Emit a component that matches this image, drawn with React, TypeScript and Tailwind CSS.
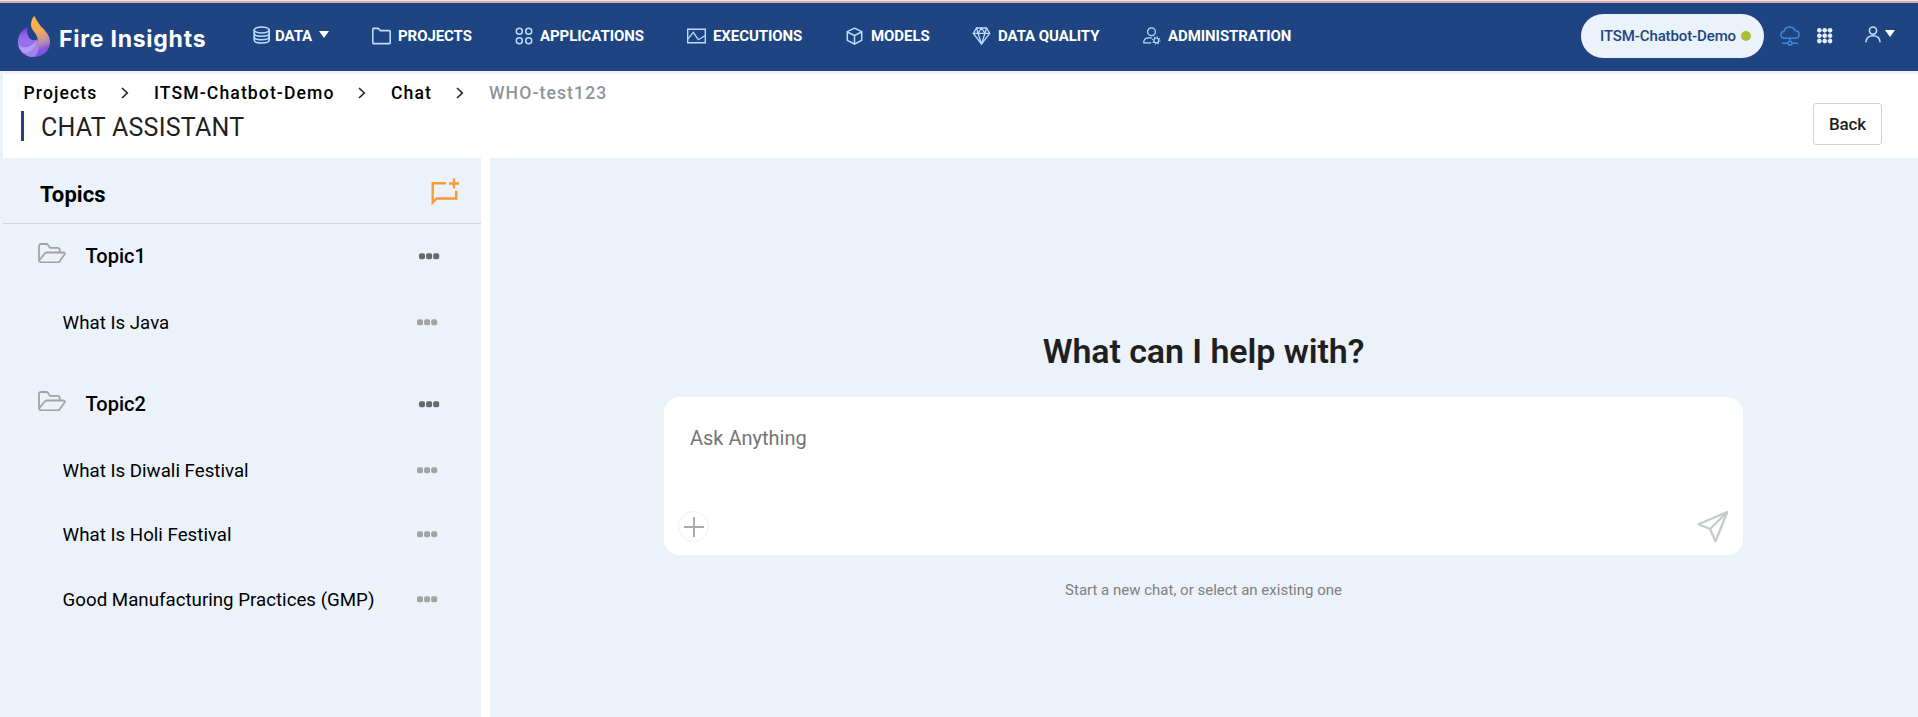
import type { ReactNode } from 'react';

const Flame = () => (
  <svg width="34" height="42" viewBox="0 0 34 42" className="shrink-0">
    <defs>
      <linearGradient id="fl" x1="0.35" y1="0" x2="0.55" y2="1">
        <stop offset="0" stopColor="#ffb347" />
        <stop offset="0.4" stopColor="#f5a85c" />
        <stop offset="0.68" stopColor="#b98bb0" />
        <stop offset="0.85" stopColor="#8257dd" />
        <stop offset="1" stopColor="#7650e6" />
      </linearGradient>
      <linearGradient id="sw" x1="0.4" y1="0" x2="0.5" y2="1">
        <stop offset="0" stopColor="#6a3be2" />
        <stop offset="0.45" stopColor="#a884ee" />
        <stop offset="1" stopColor="#8f6ae8" />
      </linearGradient>
    </defs>
    <path d="M17 0C19.500 3 20.500 6.500 24 10.500C29 15.500 33 19.500 33 26C33 34.500 26 41 17 41C13 41 11 40 10 39C16 36 21.500 29 20.500 22.500C19.500 17 14.500 14.500 14 9.500C13.700 6 15 2.500 17 0Z" fill="url(#fl)" />
    <path d="M10.500 11.500C9.800 16 10.500 20.500 13.500 23.300C15 24.800 18 24.800 20 23.500C21 25 22 33 19 37C18 38.500 17.500 40 16 41C8 41 1 34.500 1 26C1 19.500 4 14 10.500 11.500Z" fill="url(#sw)" />
    <path d="M1.200 24C3 19 8 17.500 11 20C13 24 16 25.300 19.800 23.700C18 29 13 32 7 31.500C4 31 1.500 28 1.200 24Z" fill="#8f66ea" opacity="0.650" />
    <path d="M1.500 29.500C7 33 14 31.500 19.500 24.500C20 31 14 37 7 37.500C4 35.500 2.300 33 1.500 29.500Z" fill="#b49af2" />
    <path d="M7 37.500C13 37.500 18.500 33 20 25.500C23 32 21.500 38 16.500 41C13 41 9.500 40 7 37.500Z" fill="#a283ec" />
  </svg>
);

const s = { fill: 'none', stroke: '#b9dcff', strokeWidth: 1.4, strokeLinejoin: 'round' as const, strokeLinecap: 'round' as const };

const DatabaseIcon = () => (
  <svg width="18" height="18" viewBox="0 0 18 18" {...s} strokeWidth={1.6}>
    <ellipse cx="8.700" cy="4" rx="7.500" ry="3" />
    <path d="M1.200 4v10c0 1.700 3.300 3 7.500 3s7.500-1.300 7.500-3V4" />
    <path d="M1.200 7.300c0 1.700 3.300 3 7.500 3s7.500-1.300 7.500-3M1.200 10.800c0 1.700 3.300 3 7.500 3s7.500-1.300 7.500-3" />
  </svg>
);
const FolderIcon = () => (
  <svg width="19" height="18" viewBox="0 0 19 18" {...s} strokeWidth={1.6}>
    <path d="M.8 15.800V2.200c0-.5.3-.8.8-.8h4.600l2.200 2.200h9c.5 0 .8.300.8.800v11.400c0 .5-.3.800-.8.800H1.600c-.5 0-.8-.3-.8-.8Z" />
  </svg>
);
const AppsIcon = () => (
  <svg width="18" height="18" viewBox="0 0 18 18" {...s} strokeWidth={1.5}>
    <circle cx="4.300" cy="4.300" r="3" /><circle cx="13.700" cy="4.300" r="3" />
    <circle cx="4.300" cy="13.700" r="3" /><circle cx="13.700" cy="13.700" r="3" />
  </svg>
);
const ExecIcon = () => (
  <svg width="20" height="18" viewBox="0 0 20 18" {...s} strokeWidth={1.4} strokeLinejoin="miter">
    <path d="M1.700 2.200h17.600v13.600H1.700Z" />
    <path d="M2 11.800 7.300 5.300 12.300 12.700 19 8.800" strokeWidth="1.200" />
  </svg>
);
const CubeIcon = () => (
  <svg width="18" height="18" viewBox="0 0 18 18" {...s} strokeWidth={1.5}>
    <path d="M9.500 1.200 16.700 4.700v8.600L9.500 17 2.300 13.300V4.700Z" />
    <path d="M2.300 5 9.500 8.500 16.700 5M9.500 8.500V17" />
  </svg>
);
const GemIcon = () => (
  <svg width="20" height="18" viewBox="0 0 20 18" {...s} strokeWidth={1.3}>
    <path d="M5.500 1h10l3.200 5.300L10.500 17 2.300 6.300Z" />
    <path d="M2.300 6.300h16.400M5.500 1 7 6.300 10.500 17 14 6.300 15.500 1M7 6.300 10.500 1 14 6.300" />
  </svg>
);
const AdminIcon = () => (
  <svg width="20" height="18" viewBox="0 0 20 18" {...s} strokeWidth={1.3}>
    <circle cx="9.500" cy="4.800" r="3.900" />
    <path d="M9.500 10.800H6.500C3.500 10.800 1.700 12.800 1.700 15.800H8.700" />
    <circle cx="14.300" cy="13.400" r="2.400" strokeWidth="1.200" />
    <circle cx="14.300" cy="13.400" r="3.600" strokeWidth="1.200" strokeDasharray="1.200 1.627" strokeLinecap="butt" />
  </svg>
);

const Caret = () => (
  <svg width="10" height="7" viewBox="0 0 10 7" fill="#fff"><path d="M0 0h10L5 7Z" /></svg>
);

const NavItem = ({ icon, label, w, gap, children }: { icon: ReactNode; label: string; w: string; gap: string; children?: ReactNode }) => (
  <li className={`flex items-center ${w} ${gap}`}>
    {icon}
    <span className="tracking-[-0.07px]">{label}</span>
    {children}
  </li>
);

const FolderOpen = () => (
  <svg width="28" height="20" viewBox="0 0 28 20" fill="none" stroke="#a3a3a3" strokeWidth="1.800" strokeLinejoin="round" strokeLinecap="round">
    <path d="M1 16.500V3C1 1.800 1.700 1 3 1h5.300c.7 0 1.100.2 1.500.7L12 4.800h7.600c1.300 0 2.100.8 2.100 2v2.400" />
    <path d="M1.200 17.500 6.500 10.700c.6-.8 1.200-1.200 2.200-1.200h16.600c1.400 0 2 1 1.200 2l-4.800 6.800c-.6.700-1.200 1-2 1H3c-1.300 0-2-.8-2-2" />
  </svg>
);

const Dots = ({ className }: { className: string }) => (
  <svg width="21" height="7" viewBox="0 0 21 7" fill="currentColor" className={className}>
    <rect x="0" y="0.300" width="6" height="6" rx="1.800" /><rect x="7.100" y="0.300" width="6" height="6" rx="1.800" /><rect x="14.200" y="0.300" width="6" height="6" rx="1.800" />
  </svg>
);

const Topic = ({ name }: { name: string }) => (
  <div className="flex h-[64px] items-center pl-[34.500px] pr-[41px]">
    <div className="mb-[6px]"><FolderOpen /></div>
    <span className="ml-[20px] flex-1 text-[20px] font-medium">{name}</span>
    <Dots className="text-[#666a6e]" />
  </div>
);

const Chat = ({ name, h }: { name: string; h: string }) => (
  <div className={`flex items-center pl-[59.600px] pr-[43.500px] ${h}`}>
    <span className="flex-1 pt-[2px] text-[18.720px]">{name}</span>
    <Dots className="text-[#a3a3a3]" />
  </div>
);

const Chevron = () => (
  <svg width="8" height="12" viewBox="0 0 8 12" fill="none" stroke="#222" strokeWidth="1.600"><path d="M1 1l5.300 5L1 11" /></svg>
);

export default function App() {
  return (
    <div className="flex h-[717px] w-full flex-col overflow-hidden bg-[#ebf2fa] font-['Roboto',sans-serif] text-black">
      <div className="h-px shrink-0 bg-[#f8dfe5]" />
      <div className="h-[2px] shrink-0 bg-[#d5aeb5]" />
      <header className="flex h-[68px] shrink-0 items-start bg-[#1e4582]">
        <div className="flex w-[253px] items-start pl-[17px] pt-[13px]">
          <Flame />
          <span className="ml-[8px] mt-[6px] whitespace-nowrap font-['Inter',sans-serif] text-[23px] font-bold leading-[34px] tracking-[0.750px] text-white">Fire Insights</span>
        </div>
        <ul className="flex h-[66px] items-center text-[15px] font-bold leading-[18px] text-white">
          <NavItem icon={<div className="mb-[3px]"><DatabaseIcon /></div>} label="DATA" w="w-[119px]" gap="gap-[4px]"><div className="mb-[4px] ml-[3px]"><Caret /></div></NavItem>
          <NavItem icon={<FolderIcon />} label="PROJECTS" w="w-[143px]" gap="gap-[7px]" />
          <NavItem icon={<AppsIcon />} label="APPLICATIONS" w="w-[171px]" gap="gap-[7px]" />
          <NavItem icon={<ExecIcon />} label="EXECUTIONS" w="w-[159px]" gap="gap-[7px]" />
          <NavItem icon={<CubeIcon />} label="MODELS" w="w-[126px]" gap="gap-[8px]" />
          <NavItem icon={<GemIcon />} label="DATA QUALITY" w="w-[171px]" gap="gap-[7px]" />
          <NavItem icon={<AdminIcon />} label="ADMINISTRATION" w="w-[160px]" gap="gap-[6px]" />
        </ul>
        <div className="ml-auto flex pr-[23px] pt-[11px]">
          <div className="flex h-[44px] w-[183px] items-center rounded-full bg-[#ebf2fa] pl-[19px]">
            <span className="text-[15px] font-medium tracking-[-0.120px] text-[#1e4582]">ITSM-Chatbot-Demo</span>
            <span className="ml-[5px] size-[10px] rounded-full bg-[#a9bf38]" />
          </div>
          <svg width="20" height="20" viewBox="0 0 20 20" fill="none" stroke="#4285d8" strokeWidth="1.500" className="ml-[16px] mt-[12px]">
            <path d="M5 12.300C2.500 12.300.9 10.800.9 8.800c0-1.900 1.300-3.300 3.200-3.500C4.600 2.600 6.800.9 9.700.9c2.700 0 4.800 1.500 5.600 3.900 2.200.1 3.800 1.700 3.800 3.800 0 2.200-1.600 3.700-4 3.700Z" />
            <path d="M10 12.300v3M2 17.300h6M12 17.300h6" /><circle cx="10" cy="17.200" r="1.900" />
          </svg>
          <svg width="16" height="16" viewBox="0 0 16 16" fill="#e6effa" className="ml-[17px] mt-[14px]">
            {[2.300, 7.700, 13.100].map((y) => [2.300, 7.700, 13.100].map((x) => <circle key={`${x}-${y}`} cx={x} cy={y} r="2.300" />))}
            <path d="M2 7.700h11.500M7.700 2v11.500M2 2.300h11.500M2 13.100h11.500M2.300 2v11.500M13.100 2v11.500" stroke="#e6effa" strokeWidth="0.500" />
          </svg>
          <svg width="16" height="17" viewBox="0 0 16 17" fill="none" stroke="#c4e0ff" strokeWidth="1.600" className="ml-[32px] mt-[12px]">
            <circle cx="8" cy="4.600" r="3.600" /><path d="M.9 16.300C1.100 12.200 4 9.700 8 9.700s6.900 2.500 7.100 6.600" />
          </svg>
          <div className="ml-[4px] mt-[16px]"><Caret /></div>
        </div>
      </header>
      <div className="h-[3px] shrink-0 bg-[#edf1fb]" />
      <div className="ml-[3px] flex h-[84px] shrink-0 bg-white">
        <div className="flex-1">
          <nav className="flex h-[37px] items-center whitespace-nowrap pl-[20.500px] pt-px text-[17.600px] font-medium tracking-[1.100px]">
            <span className="w-[97.500px]">Projects</span><Chevron />
            <span className="ml-[25px] w-[204px]">ITSM-Chatbot-Demo</span><Chevron />
            <span className="ml-[25px] w-[65px]">Chat</span><Chevron />
            <span className="ml-[25px] text-[#8c959c]">WHO-test123</span>
          </nav>
          <div className="ml-[18px] flex h-[30px] items-center border-l-[3px] border-[#1e4582] pl-[17px] pt-[2px]">
            <h1 className="text-[25px] font-[450] leading-[29px] tracking-[0.250px] text-[#1f1f1f]">CHAT ASSISTANT</h1>
          </div>
        </div>
        <button className="mr-[36px] mt-[29px] h-[42px] w-[69px] rounded-[3px] border border-[#cfd2d9] bg-white pt-[2px] text-[17px] font-medium tracking-[-0.100px] text-[#1f1f1f]">Back</button>
      </div>
      <div className="ml-[3px] flex flex-1">
        <aside className="w-[478px]">
          <div className="flex h-[66px] items-start border-b border-[#d0d5e0] pl-[37px]">
            <h2 className="mt-[21px] text-[22px] font-bold leading-[32px] tracking-[0.100px]">Topics</h2>
            <svg width="30" height="30" viewBox="0 0 30 30" fill="none" stroke="#ff9933" strokeWidth="2.400" className="ml-auto mr-[21px] mt-[19px]">
              <path d="M16 6.200H2.700V25.500L6.700 21.500H26.200V13.700" /><path d="M24 1.500v10M19 6.500h10" />
            </svg>
          </div>
          <Topic name="Topic1" />
          <Chat name="What Is Java" h="h-[69px]" />
          <div className="h-[15px]" />
          <Topic name="Topic2" />
          <Chat name="What Is Diwali Festival" h="h-[69px]" />
          <Chat name="What Is Holi Festival" h="h-[59px]" />
          <Chat name="Good Manufacturing Practices (GMP)" h="h-[70px]" />
        </aside>
        <div className="w-[9px] bg-white" />
        <main className="flex flex-1 flex-col items-center pr-px pt-[170px]">
          <h2 className="text-[34px] font-semibold leading-[46px] tracking-[-0.080px] text-[#1f1f1f]">What can I help with?</h2>
          <div className="mt-[23px] flex h-[158px] w-[1079px] flex-col justify-between rounded-[16px] bg-white pb-[12px] pl-[14px] pr-[14px] pt-[26px]">
            <div className="pl-[12px] text-[20px] leading-[30px] text-[#757575]">Ask Anything</div>
            <div className="flex items-center justify-between">
              <div className="flex size-[31px] items-center justify-center rounded-full border border-[#eef0fa]">
                <svg width="20" height="20" viewBox="0 0 20 20" stroke="#a9a9ad" strokeWidth="1.900"><path d="M10 0v20M0 10h20" /></svg>
              </div>
              <svg width="33" height="33" viewBox="0 0 33 33" fill="none" stroke="#c5cbca" strokeWidth="2.300" strokeLinejoin="round">
                <path d="M31.300 2 2.500 14.200 14 19 19.500 31.300ZM14 19 31.300 2" />
              </svg>
            </div>
          </div>
          <p className="mt-[24px] text-[15px] leading-[22px] text-[#808080]">Start a new chat, or select an existing one</p>
        </main>
      </div>
    </div>
  );
}
